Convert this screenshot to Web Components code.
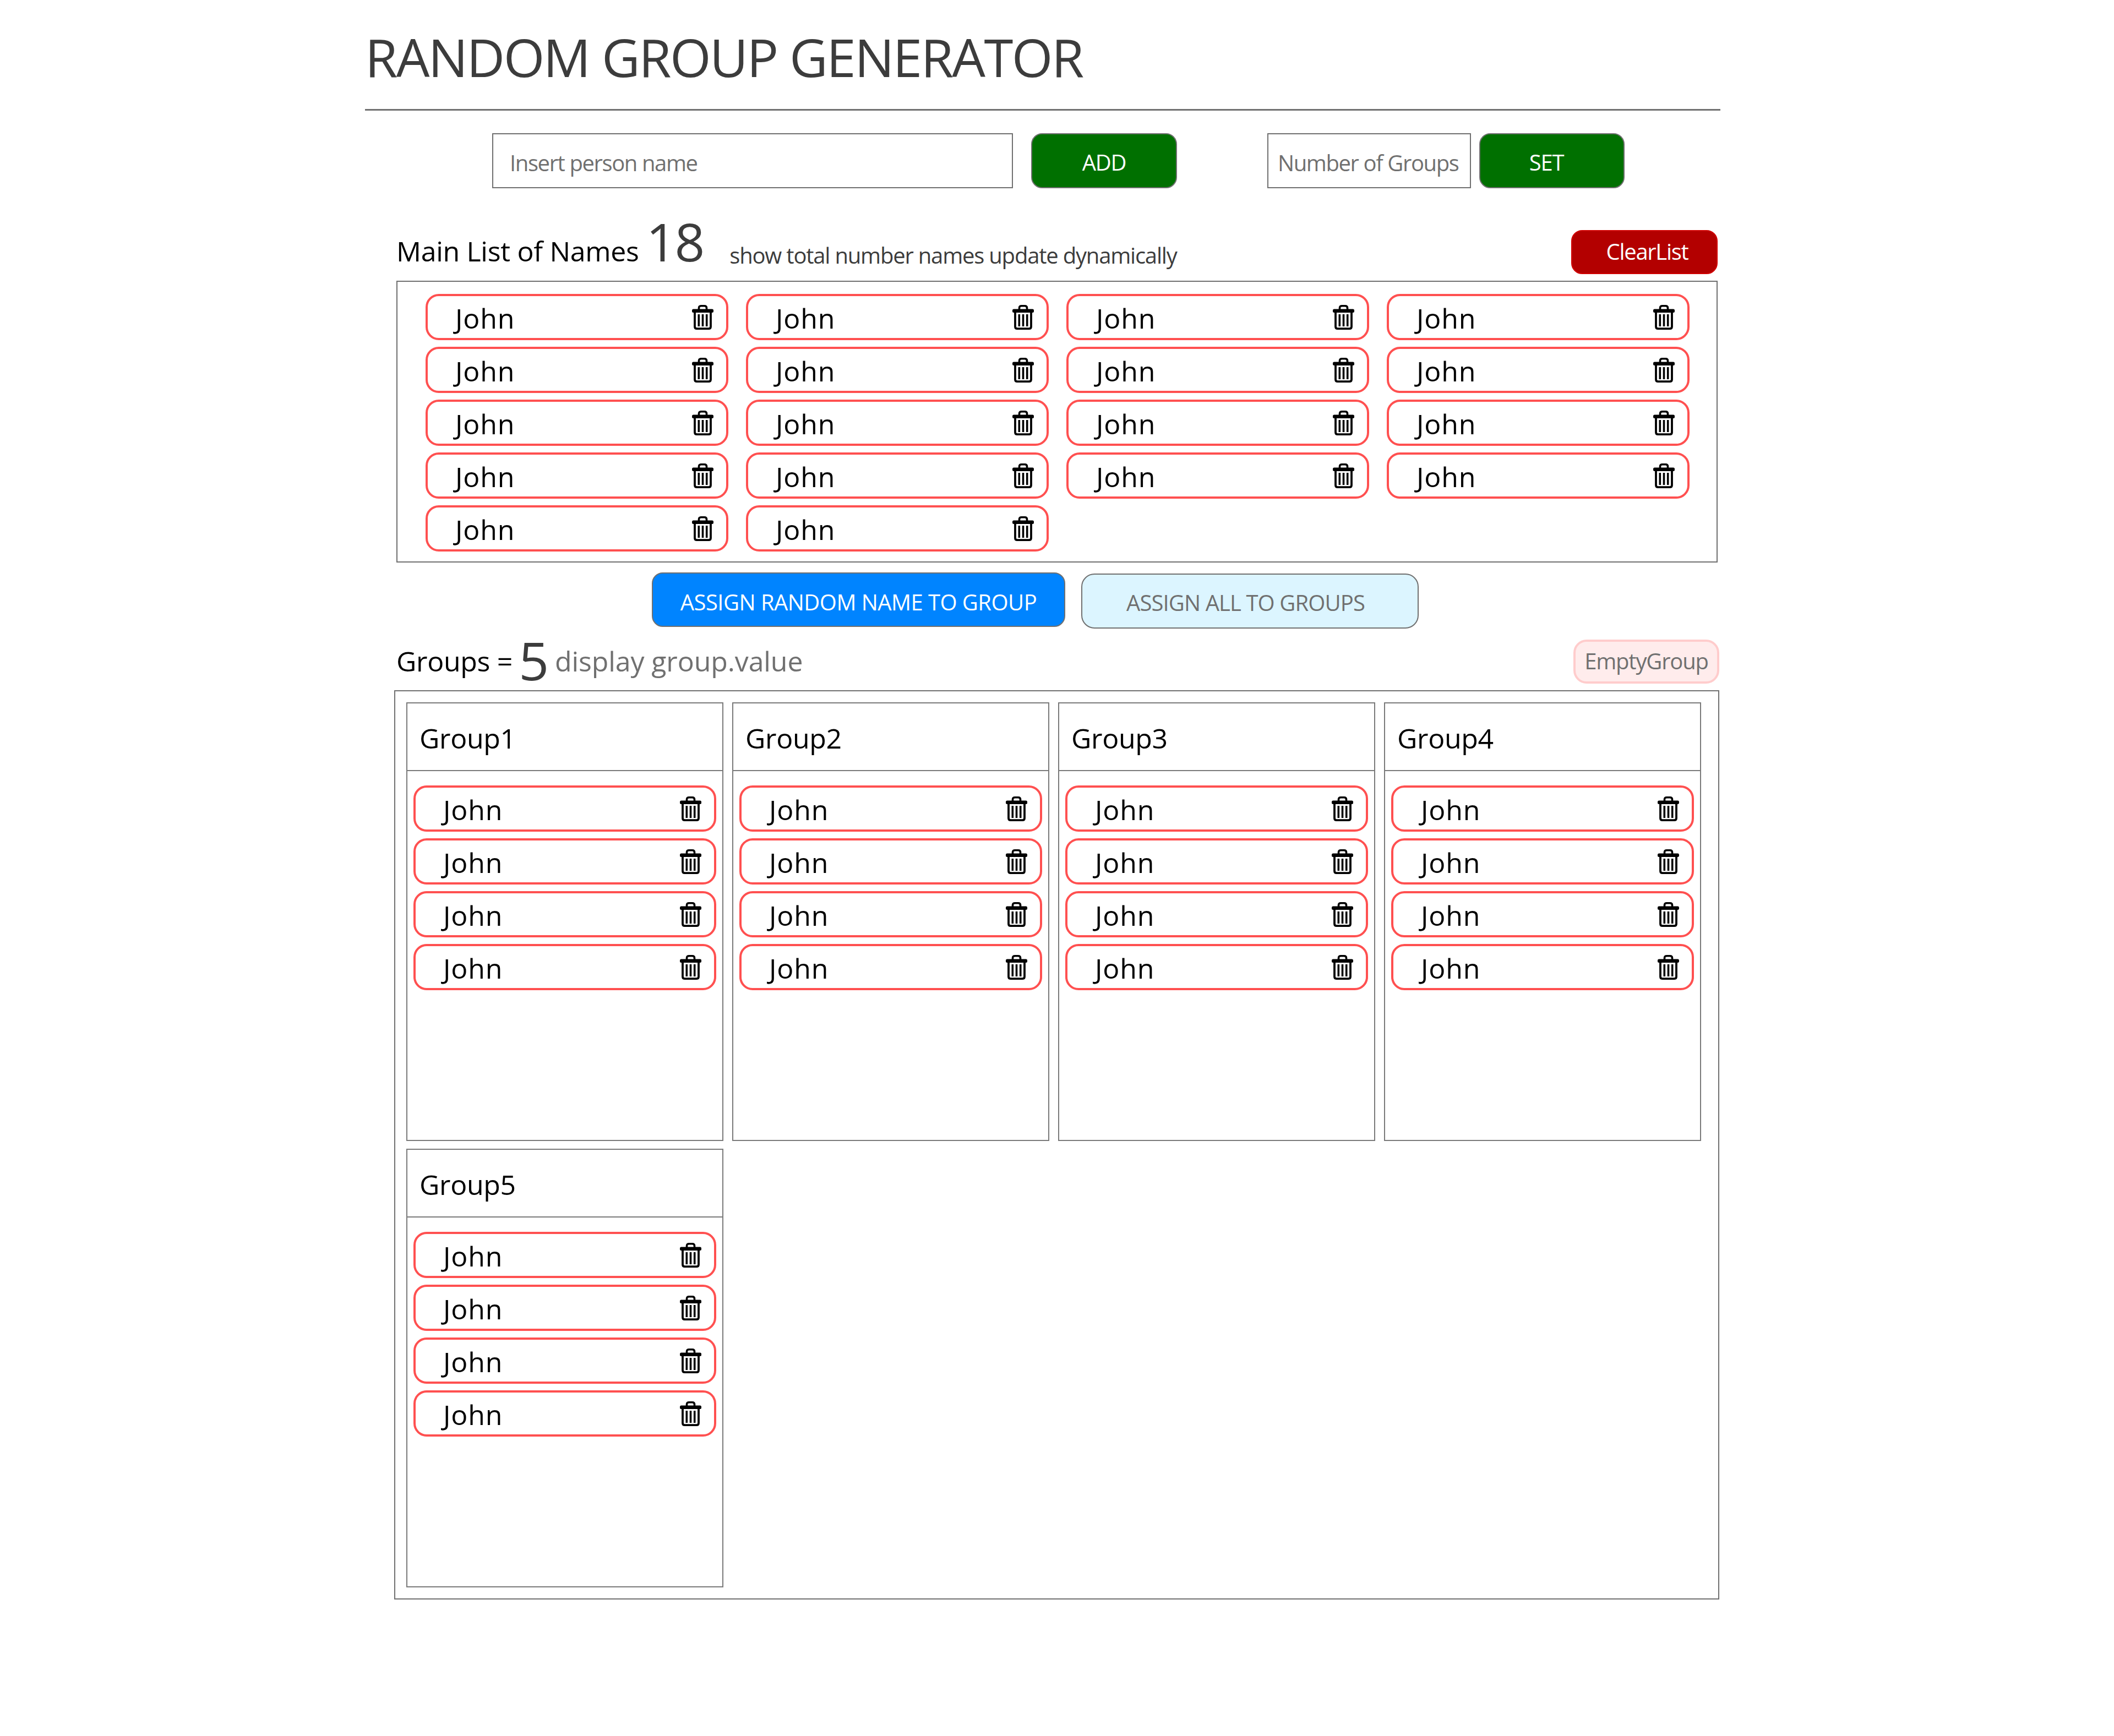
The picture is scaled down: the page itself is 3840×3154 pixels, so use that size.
<!DOCTYPE html>
<html>
<head>
<meta charset="utf-8">
<title>Random Group Generator</title>
<style>
  html, body { margin: 0; padding: 0; background: #fff; }
  body { font-family: "Open Sans", "Noto Sans", sans-serif; font-weight: 400; }
</style>
</head>
<body>
<rg-app></rg-app>
<script>
customElements.define(
  "rg-trash",
  class extends HTMLElement {
    constructor() {
      super();
      this.attachShadow({ mode: "open" });
      this.shadowRoot.innerHTML = `
        <style>
          :host { display: block; width: 39px; height: 45px; }
          svg { display: block; }
        </style>
        <svg width="39" height="45" viewBox="0 0 39 45" fill="none">
          <path d="M12.5 8V5.5C12.5 3 14 1.8 16.5 1.8H22.5C25 1.8 26.5 3 26.5 5.5V8" stroke="#000" stroke-width="3.6"/>
          <rect x="0" y="7.5" width="39" height="6.5" rx="2.5" fill="#000"/>
          <path d="M5 13V39.5C5 42 6.2 43.1 8.7 43.1H30.3C32.8 43.1 34 42 34 39.5V13" stroke="#000" stroke-width="3.8"/>
          <rect x="10.5" y="17" width="3.6" height="22" fill="#000"/>
          <rect x="17.7" y="17" width="3.6" height="22" fill="#000"/>
          <rect x="24.9" y="17" width="3.6" height="22" fill="#000"/>
        </svg>
      `;
    }
  }
);

customElements.define(
  "rg-chip",
  class extends HTMLElement {
    constructor() {
      super();
      this.attachShadow({ mode: "open" });
      this.shadowRoot.innerHTML = `
        <style>
          :host {
            display: flex;
            justify-content: space-between;
            box-sizing: border-box;
            width: 550px;
            height: 84px;
            padding: 0 23px 0 50px;
            border: 4px solid #ff5050;
            border-radius: 24px;
            color: #000;
            font-size: 50px;
            line-height: 80px;
            letter-spacing: 0.9px;
          }
          .name { display: block; }
          rg-trash { margin-top: 16px; }
        </style>
        <span class="name"><slot></slot></span>
        <rg-trash></rg-trash>
      `;
    }
  }
);

customElements.define(
  "rg-button",
  class extends HTMLElement {
    constructor() {
      super();
      this.attachShadow({ mode: "open" });
      this.shadowRoot.innerHTML = `
        <style>
          :host {
            display: flex;
            align-items: center;
            justify-content: center;
            box-sizing: border-box;
            height: var(--h, 100px);
            width: var(--w, auto);
            padding: var(--pad, 4px 0 0 0);
            background: var(--bg, #007000);
            color: var(--fg, #fff);
            border: var(--bd, 2px solid #707070);
            border-radius: var(--r, 20px);
            font-size: 40px;
            letter-spacing: var(--ls, -1.3px);
            white-space: nowrap;
          }
        </style>
        <slot></slot>
      `;
    }
  }
);

customElements.define(
  "rg-field",
  class extends HTMLElement {
    constructor() {
      super();
      this.attachShadow({ mode: "open" });
      this.shadowRoot.innerHTML = `
        <style>
          :host { display: block; width: var(--w, 300px); height: 100px; }
          input {
            box-sizing: border-box;
            display: block;
            width: 100%;
            height: 100%;
            margin: 0;
            padding: 6px 0 0 var(--pad, 30px);
            border: 2px solid #707070;
            border-radius: 0;
            outline: none;
            background: #fff;
            font: 400 40px "Open Sans", "Noto Sans", sans-serif;
            letter-spacing: -1.4px;
          }
          input::placeholder { color: #707070; opacity: 1; }
        </style>
        <input type="text" placeholder="${this.getAttribute("placeholder")}">
      `;
    }
  }
);

customElements.define(
  "rg-group",
  class extends HTMLElement {
    constructor() {
      super();
      this.attachShadow({ mode: "open" });
      this.shadowRoot.innerHTML = `
        <style>
          :host {
            display: block;
            box-sizing: border-box;
            width: 576px;
            height: 797px;
            border: 2px solid #7a7a7a;
          }
          .title {
            box-sizing: border-box;
            height: 123px;
            padding: 0 0 0 22px;
            border-bottom: 2px solid #7a7a7a;
            color: #000;
            font-size: 50px;
            line-height: 126px;
            letter-spacing: -0.3px;
          }
          .names {
            display: flex;
            flex-direction: column;
            gap: 12px;
            padding: 26px 0 0 11px;
          }
        </style>
        <div class="title">${this.getAttribute("title")}</div>
        <div class="names"><slot></slot></div>
      `;
    }
  }
);

customElements.define(
  "rg-app",
  class extends HTMLElement {
    constructor() {
      super();
      const chips = (n) => Array(n).fill("<rg-chip>John</rg-chip>").join("");
      const groups = [1, 2, 3, 4, 5]
        .map((i) => `<rg-group title="Group${i}">${chips(4)}</rg-group>`)
        .join("");

      this.attachShadow({ mode: "open" });
      this.shadowRoot.innerHTML = `
        <style>
          :host {
            display: block;
            box-sizing: border-box;
            width: 3840px;
            height: 3154px;
            padding-left: 663px;
          }
          .wrap { width: 2462px; }
          h1 {
            box-sizing: border-box;
            margin: 0;
            border-bottom: 3px solid #707070;
            height: 201px;
            color: #3c3c3c;
            font-size: 96px;
            font-weight: 400;
            line-height: 205px;
            letter-spacing: -2.55px;
          }
          .toolbar {
            display: flex;
            margin: 41px 0 0 231px;
          }
          .ml33 { margin-left: 33px; }
          .ml164 { margin-left: 164px; }
          .ml15 { margin-left: 15px; }

          .main-head {
            display: flex;
            justify-content: space-between;
            width: 2400px;
            height: 92px;
            margin: 76px 0 0 57px;
          }
          .counts {
            box-sizing: border-box;
            height: 70px;
            color: #000;
            font-size: 50px;
            line-height: 40px;
            letter-spacing: -0.3px;
            white-space: nowrap;
          }
          .big {
            color: #3c3c3c;
            font-size: 96px;
            letter-spacing: -3px;
          }
          .hint {
            color: #3c3c3c;
            font-size: 40px;
            letter-spacing: -1.2px;
            vertical-align: -4px;
          }
          .list {
            display: grid;
            grid-template-columns: repeat(4, 550px);
            align-content: start;
            gap: 12px 32px;
            box-sizing: border-box;
            width: 2400px;
            height: 512px;
            margin-left: 57px;
            padding: 22px 0 0 51px;
            border: 2px solid #707070;
          }
          .assign {
            display: flex;
            margin: 18px 0 0 521px;
          }
          .group-head {
            display: flex;
            justify-content: space-between;
            width: 2403px;
            height: 92px;
            margin: 20px 0 0 57px;
          }
          .group-head .counts { height: 87px; padding-top: 17px; }
          .note { color: #707070; letter-spacing: -0.1px; }
          .five { vertical-align: -16px; }
          .board {
            display: flex;
            flex-wrap: wrap;
            align-content: flex-start;
            gap: 14px 16px;
            box-sizing: border-box;
            width: 2407px;
            height: 1652px;
            margin-left: 53px;
            padding: 20px 0 0 20px;
            border: 2px solid #707070;
          }
        </style>
        <div class="wrap">
          <h1>RANDOM GROUP GENERATOR</h1>

          <div class="toolbar">
            <rg-field placeholder="Insert person name" style="--w:946px"></rg-field>
            <rg-button class="ml33" style="--w:265px">ADD</rg-button>
            <rg-field class="ml164" placeholder="Number of Groups" style="--w:370px; --pad:17px"></rg-field>
            <rg-button class="ml15" style="--w:264px; --pad:4px 20px 0 0">SET</rg-button>
          </div>

          <div class="main-head">
            <div class="counts"><span>Main List of Names</span><span class="big" style="margin-left:13px">18</span><span class="hint" style="margin-left:48px">show total number names update dynamically</span></div>
            <rg-button style="--w:266px; --h:80px; --pad:0 0 4px 10px; --bg:#b30000; --bd:2px solid #d00000">ClearList</rg-button>
          </div>

          <div class="list">${chips(18)}</div>

          <div class="assign">
            <rg-button style="--w:751px; --h:99px; --pad:8px 0 0 0; --ls:-0.55px; --bg:#0084ff">ASSIGN RANDOM NAME TO GROUP</rg-button>
            <rg-button style="--w:613px; --pad:4px 16px 0 0; --ls:-0.9px; --bg:#dcf5ff; --fg:#707070; --r:24px; margin:2px 0 0 29px">ASSIGN ALL TO GROUPS</rg-button>
          </div>

          <div class="group-head">
            <div class="counts"><span>Groups =</span><span class="big five" style="margin-left:11px">5</span><span class="note" style="margin-left:14px">display group.value</span></div>
            <rg-button style="--w:265px; --h:80px; --pad:0 0 4px 0; --ls:-1.2px; --r:24px; --bg:#ffecec; --fg:#707070; --bd:4px solid #ffcccc">EmptyGroup</rg-button>
          </div>

          <div class="board">${groups}</div>
        </div>
      `;
    }
  }
);
</script>
</body>
</html>
